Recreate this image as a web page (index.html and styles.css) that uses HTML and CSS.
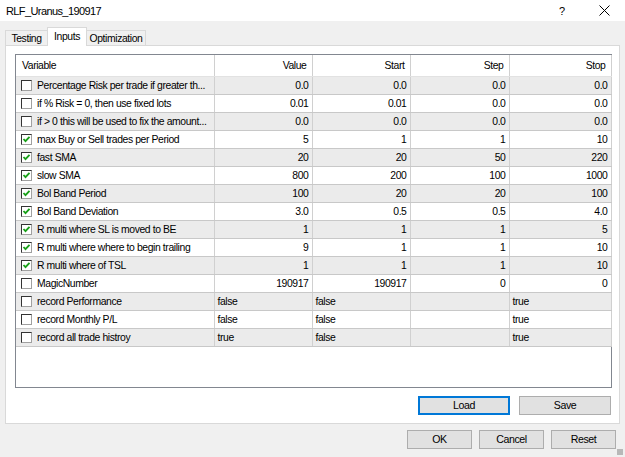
FILE: index.html
```html
<!DOCTYPE html>
<html>
<head>
<meta charset="utf-8">
<link rel="stylesheet" href="styles.css">
</head>
<body>
<div class="window">
  <div class="titlebar">
    <span class="title">RLF_Uranus_190917</span>
    <span class="help">?</span>
    <span class="close"><svg width="11" height="11" viewBox="0 0 11 11"><path d="M0.5 0.5 L10.5 10.5 M10.5 0.5 L0.5 10.5" stroke="#000" stroke-width="1" fill="none"/></svg></span>
  </div>
  <div class="tabs">
    <div class="tab t-testing">Testing</div>
    <div class="tab active">Inputs</div>
    <div class="tab t-opt">Optimization</div>
  </div>
  <div class="panel">
    <div class="grid">
      <table>
        <colgroup><col class="c1"><col class="c2"><col class="c3"><col class="c4"><col class="c5"></colgroup>
        <thead>
          <tr><th class="l">Variable</th><th>Value</th><th>Start</th><th>Step</th><th>Stop</th></tr>
        </thead>
        <tbody>
          <tr class="g"><td class="v"><span class="cb"></span>Percentage Risk per trade if greater th...</td><td>0.0</td><td>0.0</td><td>0.0</td><td>0.0</td></tr>
          <tr><td class="v"><span class="cb"></span>if % Risk = 0, then use fixed lots</td><td>0.01</td><td>0.01</td><td>0.0</td><td>0.0</td></tr>
          <tr class="g"><td class="v"><span class="cb"></span>if &gt; 0 this will be used to fix the amount...</td><td>0.0</td><td>0.0</td><td>0.0</td><td>0.0</td></tr>
          <tr><td class="v"><span class="cb"><svg width="9" height="9" viewBox="0 0 9 9"><path d="M1.5 4 L3.5 6.2 L7.5 1.8" stroke="#18a018" stroke-width="1.8" fill="none"/></svg></span>max Buy or Sell trades per Period</td><td>5</td><td>1</td><td>1</td><td>10</td></tr>
          <tr class="g"><td class="v"><span class="cb"><svg width="9" height="9" viewBox="0 0 9 9"><path d="M1.5 4 L3.5 6.2 L7.5 1.8" stroke="#18a018" stroke-width="1.8" fill="none"/></svg></span>fast SMA</td><td>20</td><td>20</td><td>50</td><td>220</td></tr>
          <tr><td class="v"><span class="cb"><svg width="9" height="9" viewBox="0 0 9 9"><path d="M1.5 4 L3.5 6.2 L7.5 1.8" stroke="#18a018" stroke-width="1.8" fill="none"/></svg></span>slow SMA</td><td>800</td><td>200</td><td>100</td><td>1000</td></tr>
          <tr class="g"><td class="v"><span class="cb"><svg width="9" height="9" viewBox="0 0 9 9"><path d="M1.5 4 L3.5 6.2 L7.5 1.8" stroke="#18a018" stroke-width="1.8" fill="none"/></svg></span>Bol Band Period</td><td>100</td><td>20</td><td>20</td><td>100</td></tr>
          <tr><td class="v"><span class="cb"><svg width="9" height="9" viewBox="0 0 9 9"><path d="M1.5 4 L3.5 6.2 L7.5 1.8" stroke="#18a018" stroke-width="1.8" fill="none"/></svg></span>Bol Band Deviation</td><td>3.0</td><td>0.5</td><td>0.5</td><td>4.0</td></tr>
          <tr class="g"><td class="v"><span class="cb"><svg width="9" height="9" viewBox="0 0 9 9"><path d="M1.5 4 L3.5 6.2 L7.5 1.8" stroke="#18a018" stroke-width="1.8" fill="none"/></svg></span>R multi where SL is moved to BE</td><td>1</td><td>1</td><td>1</td><td>5</td></tr>
          <tr><td class="v"><span class="cb"><svg width="9" height="9" viewBox="0 0 9 9"><path d="M1.5 4 L3.5 6.2 L7.5 1.8" stroke="#18a018" stroke-width="1.8" fill="none"/></svg></span>R multi where where to begin trailing</td><td>9</td><td>1</td><td>1</td><td>10</td></tr>
          <tr class="g"><td class="v"><span class="cb"><svg width="9" height="9" viewBox="0 0 9 9"><path d="M1.5 4 L3.5 6.2 L7.5 1.8" stroke="#18a018" stroke-width="1.8" fill="none"/></svg></span>R multi where of TSL</td><td>1</td><td>1</td><td>1</td><td>10</td></tr>
          <tr><td class="v"><span class="cb"></span>MagicNumber</td><td>190917</td><td>190917</td><td>0</td><td>0</td></tr>
          <tr class="g"><td class="v"><span class="cb"></span>record Performance</td><td class="l">false</td><td class="l">false</td><td></td><td class="l">true</td></tr>
          <tr><td class="v"><span class="cb"></span>record Monthly P/L</td><td class="l">false</td><td class="l">false</td><td></td><td class="l">true</td></tr>
          <tr class="g"><td class="v"><span class="cb"></span>record all trade histroy</td><td class="l">true</td><td class="l">false</td><td></td><td class="l">true</td></tr>
        </tbody>
      </table>
    </div>
    <div class="panel-buttons">
      <button class="btn primary">Load</button>
      <button class="btn">Save</button>
    </div>
  </div>
  <div class="dialog-buttons">
    <button class="btn small">OK</button>
    <button class="btn small">Cancel</button>
    <button class="btn small">Reset</button>
  </div>
  <div class="grip"></div>
</div>
</body>
</html>
```
FILE: styles.css
```css
html, body {
  margin: 0;
  padding: 0;
}
body {
  width: 625px;
  height: 457px;
  overflow: hidden;
  background: #f0f0f0;
  font-family: "Liberation Sans", Arial, sans-serif;
  font-size: 10.4px;
  letter-spacing: -0.4px;
  color: #000;
}
.window {
  position: relative;
  width: 625px;
  height: 457px;
}
.titlebar {
  height: 21px;
  background: #fff;
  display: flex;
  align-items: center;
  padding-left: 6px;
}
.title {
  flex: 1;
  font-size: 11px;
  letter-spacing: -0.6px;
  padding-top: 1px;
}
.help {
  font-size: 11px;
  width: 12px;
  margin-right: 28px;
}
.close {
  display: flex;
  width: 11px;
  margin-right: 15px;
}
.tabs {
  display: flex;
  align-items: flex-end;
  height: 18px;
  margin-top: 6px;
  padding-left: 5px;
  position: relative;
  z-index: 2;
}
.tab {
  height: 15px;
  box-sizing: border-box;
  border: 1px solid #d9d9d9;
  border-bottom: none;
  background: #f0f0f0;
  padding: 1px 0 0;
  text-align: center;
  line-height: 13px;
}
.t-testing {
  width: 43px;
}
.tab.active {
  height: 19px;
  width: 40px;
  background: #fff;
  margin-bottom: -1px;
  margin-left: -1px;
  margin-right: -1px;
  padding-top: 2px;
  position: relative;
  z-index: 3;
}
.t-opt {
  width: 60px;
}
.panel {
  margin-left: 5px;
  width: 615px;
  height: 379px;
  box-sizing: border-box;
  border: 1px solid #d9d9d9;
  background: #fff;
  padding: 8px 0 0 9px;
}
.grid {
  width: 597px;
  height: 334px;
  box-sizing: border-box;
  border: 1px solid #828790;
  background: #fff;
}
table {
  border-collapse: collapse;
  table-layout: fixed;
  width: 595px;
}
col.c1 { width: 198px; }
col.c2 { width: 98px; }
col.c3 { width: 98px; }
col.c4 { width: 99px; }
col.c5 { width: 102px; }
th, td {
  padding: 0 3px 0 3px;
  white-space: nowrap;
  overflow: hidden;
  border-right: 1px solid #d0d0d0;
  border-bottom: 1px solid #c8c8c8;
  text-align: right;
  font-weight: normal;
}
th {
  height: 21px;
  padding-right: 5px;
  border-bottom: 1px solid #e2e2e2;
}
th.l {
  text-align: left;
  padding-left: 6px;
}
td {
  height: 17px;
  line-height: 17px;
}
td.l {
  text-align: left;
}
td.v {
  text-align: left;
  padding-left: 5px;
}
tr.g td {
  background: #ebebeb;
}
.cb {
  display: inline-block;
  width: 9px;
  height: 9px;
  border-top: 1px solid #333;
  border-left: 1px solid #333;
  border-right: 1px solid #a0a0a0;
  border-bottom: 1px solid #a0a0a0;
  background: #fff;
  vertical-align: -2px;
  margin-right: 5px;
  position: relative;
  box-sizing: content-box;
}
.cb svg {
  position: absolute;
  left: 0;
  top: 0;
}
.panel-buttons {
  display: flex;
  justify-content: flex-end;
  gap: 9px;
  margin-top: 8px;
  padding-right: 8px;
}
.btn {
  font-family: "Liberation Sans", Arial, sans-serif;
  font-size: 10.6px;
  letter-spacing: -0.4px;
  width: 92px;
  height: 19px;
  padding: 0;
  background: #e1e1e1;
  border: 1px solid #adadad;
  color: #000;
  line-height: 15px;
}
.btn.primary {
  border: 2px solid #0078d7;
}
.dialog-buttons {
  display: flex;
  justify-content: flex-end;
  gap: 7px;
  margin-top: 6px;
  padding-right: 9px;
}
.btn.small {
  width: 65px;
}
.grip {
  position: absolute;
  right: 2px;
  bottom: 2px;
  width: 6px;
  height: 6px;
  background-image: radial-gradient(circle, #b8b8b8 0.8px, transparent 1px);
  background-size: 2px 2px;
}
```
